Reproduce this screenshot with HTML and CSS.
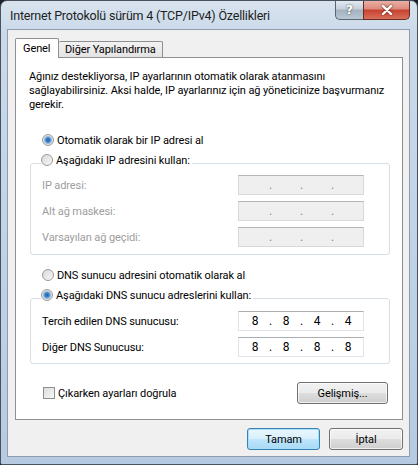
FILE: index.html
```html
<!DOCTYPE html>
<html lang="tr">
<head>
    <meta charset="UTF-8">
    <meta name="viewport" content="width=device-width, initial-scale=1.0">
    <title>Internet Protokolü sürüm 4 (TCP/IPv4) Özellikleri</title>
    <link rel="stylesheet" href="styles.css">
</head>
<body>
    <div class="window">
        <div class="titlebar">
            <span class="title">Internet Protokolü sürüm 4 (TCP/IPv4) Özellikleri</span>
            <div class="caption-buttons">
                <span class="cap-btn help">?</span>
                <span class="cap-btn close">
                    <svg width="12" height="10" viewBox="0 0 12 10">
                        <path d="M2 1 L10 9 M10 1 L2 9" stroke="#fff" stroke-width="2.4" stroke-linecap="round"/>
                    </svg>
                </span>
            </div>
        </div>

        <div class="client">
            <div class="tabs">
                <span class="tab active">Genel</span>
                <span class="tab">Diğer Yapılandırma</span>
            </div>

            <div class="panel">
                <p class="intro">Ağınız destekliyorsa, IP ayarlarının otomatik olarak atanmasını<br>sağlayabilirsiniz. Aksi halde, IP ayarlarınız için ağ yöneticinize başvurmanız<br>gerekir.</p>

                <label class="option first"><span class="radio checked"></span>Otomatik olarak bir IP adresi al</label>

                <fieldset class="group ip-group">
                    <legend><label class="option"><span class="radio"></span>Aşağıdaki IP adresini kullan:</label></legend>
                    <div class="field disabled">
                        <span class="field-label">IP adresi:</span>
                        <span class="ip-box"><span class="seg"></span><span class="dot">.</span><span class="seg"></span><span class="dot">.</span><span class="seg"></span><span class="dot">.</span><span class="seg"></span></span>
                    </div>
                    <div class="field disabled">
                        <span class="field-label">Alt ağ maskesi:</span>
                        <span class="ip-box"><span class="seg"></span><span class="dot">.</span><span class="seg"></span><span class="dot">.</span><span class="seg"></span><span class="dot">.</span><span class="seg"></span></span>
                    </div>
                    <div class="field disabled">
                        <span class="field-label">Varsayılan ağ geçidi:</span>
                        <span class="ip-box"><span class="seg"></span><span class="dot">.</span><span class="seg"></span><span class="dot">.</span><span class="seg"></span><span class="dot">.</span><span class="seg"></span></span>
                    </div>
                </fieldset>

                <label class="option dns-auto"><span class="radio"></span>DNS sunucu adresini otomatik olarak al</label>

                <fieldset class="group dns-group">
                    <legend><label class="option"><span class="radio checked"></span>Aşağıdaki DNS sunucu adreslerini kullan:</label></legend>
                    <div class="field">
                        <span class="field-label">Tercih edilen DNS sunucusu:</span>
                        <span class="ip-box"><span class="seg">8</span><span class="dot">.</span><span class="seg">8</span><span class="dot">.</span><span class="seg">4</span><span class="dot">.</span><span class="seg">4</span></span>
                    </div>
                    <div class="field">
                        <span class="field-label">Diğer DNS Sunucusu:</span>
                        <span class="ip-box"><span class="seg">8</span><span class="dot">.</span><span class="seg">8</span><span class="dot">.</span><span class="seg">8</span><span class="dot">.</span><span class="seg">8</span></span>
                    </div>
                </fieldset>

                <div class="panel-footer">
                    <label class="check"><span class="checkbox"></span>Çıkarken ayarları doğrula</label>
                    <button class="btn advanced">Gelişmiş...</button>
                </div>
            </div>

            <div class="dialog-buttons">
                <button class="btn default">Tamam</button>
                <button class="btn">İptal</button>
            </div>
        </div>
    </div>
</body>
</html>
```

FILE: styles.css
```css
* {
    box-sizing: border-box;
}

body {
    margin: 0;
    font-family: Roboto, "Liberation Sans", sans-serif;
    font-size: 11px;
    letter-spacing: -0.1px;
    color: #000;
    background: #1c2129;
}

.window {
    width: 418px;
    height: 465px;
    border: 1px solid #48525e;
    border-radius: 7px 7px 2px 2px;
    background: linear-gradient(180deg, #d8e3ee 0, #cbdaea 30px, #bed2e7 60%, #b6cbe2 100%);
    padding: 0 7px 7px 6px;
    display: flex;
    flex-direction: column;
}

/* title bar */
.titlebar {
    height: 28px;
    display: flex;
    align-items: flex-start;
}

.title {
    font-size: 12.5px;
    letter-spacing: -0.2px;
    color: #1e1e1e;
    margin: 7px 0 0 3px;
}

.caption-buttons {
    margin-left: auto;
    display: flex;
}

.cap-btn {
    height: 19px;
    display: flex;
    align-items: center;
    justify-content: center;
    border: 1px solid #5a6571;
    border-top: none;
    color: #fff;
    font-family: "DejaVu Sans", sans-serif;
    font-weight: bold;
    font-size: 12px;
    text-shadow: 0 0 2px #333;
}

.help {
    width: 28px;
    border-radius: 0 0 0 5px;
    background: linear-gradient(180deg, #e2e9f1 0, #c4ced9 45%, #a3b1bf 50%, #b9c6d3 100%);
    border-right: none;
}

.close {
    width: 47px;
    border-radius: 0 0 5px 0;
    border-color: #6a2b24;
    background: linear-gradient(180deg, #eab0a4 0, #dc8a7b 45%, #c8412f 50%, #d8705c 100%);
}

.close svg {
    filter: drop-shadow(0 0 1px #5a1a10);
}

/* client area */
.client {
    flex: 1;
    background: #f0f0f0;
    border: 1px solid #8e9cad;
    padding: 8px 6px 6px 7px;
    display: flex;
    flex-direction: column;
}

.tabs {
    display: flex;
    align-items: flex-end;
    height: 19px;
}

.tab {
    height: 16px;
    padding: 0 6px;
    border: 1px solid #8e8f8f;
    border-bottom: none;
    border-left: none;
    border-radius: 2px 2px 0 0;
    background: linear-gradient(180deg, #f2f2f2, #e3e3e3);
    display: flex;
    align-items: center;
}

.tab.active {
    position: relative;
    z-index: 1;
    height: 20px;
    margin-bottom: -1px;
    width: 44px;
    padding: 0 0 0 7px;
    background: #fff;
    border-left: 1px solid #8e8f8f;
}

.panel {
    height: 363px;
    background: #fff;
    border: 1px solid #8e8f8f;
    padding: 0 12px 14px 14px;
    display: flex;
    flex-direction: column;
}

.intro {
    margin: 12px 0 0 -1px;
    line-height: 14px;
}

/* radios and checkbox */
.option,
.check {
    display: flex;
    align-items: center;
    height: 16px;
}

.option.first {
    margin: 20px 0 0 12px;
}

.option.dns-auto {
    margin: 12px 0 0 12px;
}

.radio,
.checkbox {
    width: 12px;
    height: 12px;
    margin-right: 3px;
    border: 1px solid #9a9a9a;
    background: linear-gradient(135deg, #d8d8d8, #f8f8f8);
    flex-shrink: 0;
}

.radio {
    border-radius: 50%;
}

.radio.checked {
    background: radial-gradient(circle, #1c5fa3 0, #3f82c4 2px, #8fbbe6 3.5px, #e2e2e2 4.5px, #f6f6f6 100%);
}

.checkbox {
    border-color: #8e8f8f;
    background: linear-gradient(135deg, #dcdcdc, #f7f7f7);
}

/* group boxes */
.group {
    margin: 4px 0 0 0;
    border: 1px solid #d5dfe5;
    border-radius: 3px;
    padding: 1px 0 7px 11px;
    display: flex;
    flex-direction: column;
    gap: 6px;
}

.group legend {
    padding: 0 2px 6px 0;
    margin-left: -1px;
}

.dns-group {
    padding-top: 2px;
    padding-bottom: 6px;
}

.field {
    display: flex;
    align-items: center;
    height: 20px;
}

.field-label {
    width: 196px;
}

.field.disabled .field-label {
    color: #9d9d9d;
}

.ip-box {
    width: 126px;
    height: 20px;
    display: flex;
    align-items: center;
    padding-left: 5px;
    border: 1px solid #e2e3ea;
    border-top-color: #abadb3;
    background: #fff;
    font-size: 12px;
    letter-spacing: 0;
}

.field.disabled .ip-box {
    background: #efefef;
    border-color: #d9d9d9;
    border-top-color: #b5b5b5;
    color: #8a8a8a;
}

.seg {
    width: 22px;
    text-align: center;
}

.dot {
    width: 9px;
    text-align: center;
}

/* footer */
.panel-footer {
    margin-top: 18px;
    display: flex;
    align-items: center;
    justify-content: space-between;
    padding: 0 2px 0 13px;
}

.btn {
    height: 22px;
    font-family: inherit;
    font-size: 11px;
    letter-spacing: -0.1px;
    color: #000;
    border: 1px solid #707070;
    border-radius: 3px;
    background: linear-gradient(180deg, #f2f2f2 0, #ebebeb 48%, #dddddd 52%, #cfcfcf 100%);
    box-shadow: inset 0 0 0 1px rgba(255, 255, 255, 0.7);
    padding: 0;
}

.advanced {
    width: 91px;
}

.dialog-buttons {
    margin-top: 8px;
    display: flex;
    justify-content: flex-end;
    gap: 9px;
}

.dialog-buttons .btn {
    width: 74px;
}

.btn.default {
    width: 73px;
    border-color: #3c7fb1;
    background: linear-gradient(180deg, #eaf6fd 0, #d9f0fc 48%, #bee6fd 52%, #a7d9f5 100%);
    box-shadow: inset 0 0 0 1px #a3e0fb;
}
```
